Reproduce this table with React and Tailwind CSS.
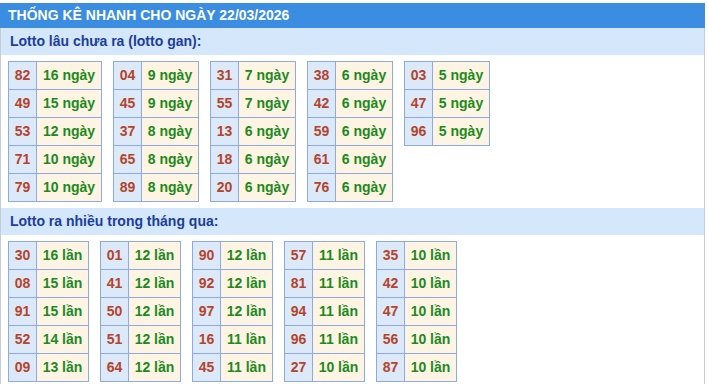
import React from "react";

const gan = [
  [["82", "16 ngày"], ["49", "15 ngày"], ["53", "12 ngày"], ["71", "10 ngày"], ["79", "10 ngày"]],
  [["04", "9 ngày"], ["45", "9 ngày"], ["37", "8 ngày"], ["65", "8 ngày"], ["89", "8 ngày"]],
  [["31", "7 ngày"], ["55", "7 ngày"], ["13", "6 ngày"], ["18", "6 ngày"], ["20", "6 ngày"]],
  [["38", "6 ngày"], ["42", "6 ngày"], ["59", "6 ngày"], ["61", "6 ngày"], ["76", "6 ngày"]],
  [["03", "5 ngày"], ["47", "5 ngày"], ["96", "5 ngày"]],
];

const nhieu = [
  [["30", "16 lần"], ["08", "15 lần"], ["91", "15 lần"], ["52", "14 lần"], ["09", "13 lần"]],
  [["01", "12 lần"], ["41", "12 lần"], ["50", "12 lần"], ["51", "12 lần"], ["64", "12 lần"]],
  [["90", "12 lần"], ["92", "12 lần"], ["97", "12 lần"], ["16", "11 lần"], ["45", "11 lần"]],
  [["57", "11 lần"], ["81", "11 lần"], ["94", "11 lần"], ["96", "11 lần"], ["27", "10 lần"]],
  [["35", "10 lần"], ["42", "10 lần"], ["47", "10 lần"], ["56", "10 lần"], ["87", "10 lần"]],
];

function Table({ rows, valW }) {
  return (
    <div className="flex flex-col border-l border-t border-[#8eaae4]">
      {rows.map(([n, v], i) => (
        <div key={i} className="flex h-[28px]">
          <div className="w-[28px] h-[28px] border-r border-b border-[#8eaae4] bg-[#dce9f9] flex items-center justify-center text-[#b5432b]">
            {n}
          </div>
          <div
            className={`${valW} h-[28px] border-r border-b border-[#8eaae4] bg-[#fdf4e3] flex items-center justify-center text-[#1d8a1d]`}
          >
            {v}
          </div>
        </div>
      ))}
    </div>
  );
}

function SubHeader({ children }) {
  return (
    <div className="h-[27px] bg-[#d5e8fb] flex items-center pl-[9px] text-[#1b3d9e] text-[14px] font-bold">
      {children}
    </div>
  );
}

export default function App() {
  return (
    <div
      className="w-[708px] h-[384px] bg-white pt-[3px] overflow-hidden"
      style={{ fontFamily: '"Liberation Sans", Arial, sans-serif' }}
    >
      <div className="w-[705px]">
        <div className="h-[25px] bg-[#3a8de0] flex items-center pl-[8px] text-white text-[14px] font-bold">
          THỐNG KÊ NHANH CHO NGÀY 22/03/2026
        </div>
        <div className="border-r border-[#c5ccd6] border-l h-[359px]">
          <SubHeader>Lotto lâu chưa ra (lotto gan):</SubHeader>
          <div className="flex items-start gap-[11px] pl-[7px] pt-[6px] pb-[6px] text-[14px] font-bold">
            {gan.map((rows, i) => (
              <Table key={i} rows={rows} valW={i === 0 ? "w-[65px]" : "w-[57px]"} />
            ))}
          </div>
          <SubHeader>Lotto ra nhiều trong tháng qua:</SubHeader>
          <div className="flex items-start gap-[11px] pl-[7px] pt-[6px] text-[14px] font-bold">
            {nhieu.map((rows, i) => (
              <Table key={i} rows={rows} valW="w-[52px]" />
            ))}
          </div>
        </div>
      </div>
    </div>
  );
}
